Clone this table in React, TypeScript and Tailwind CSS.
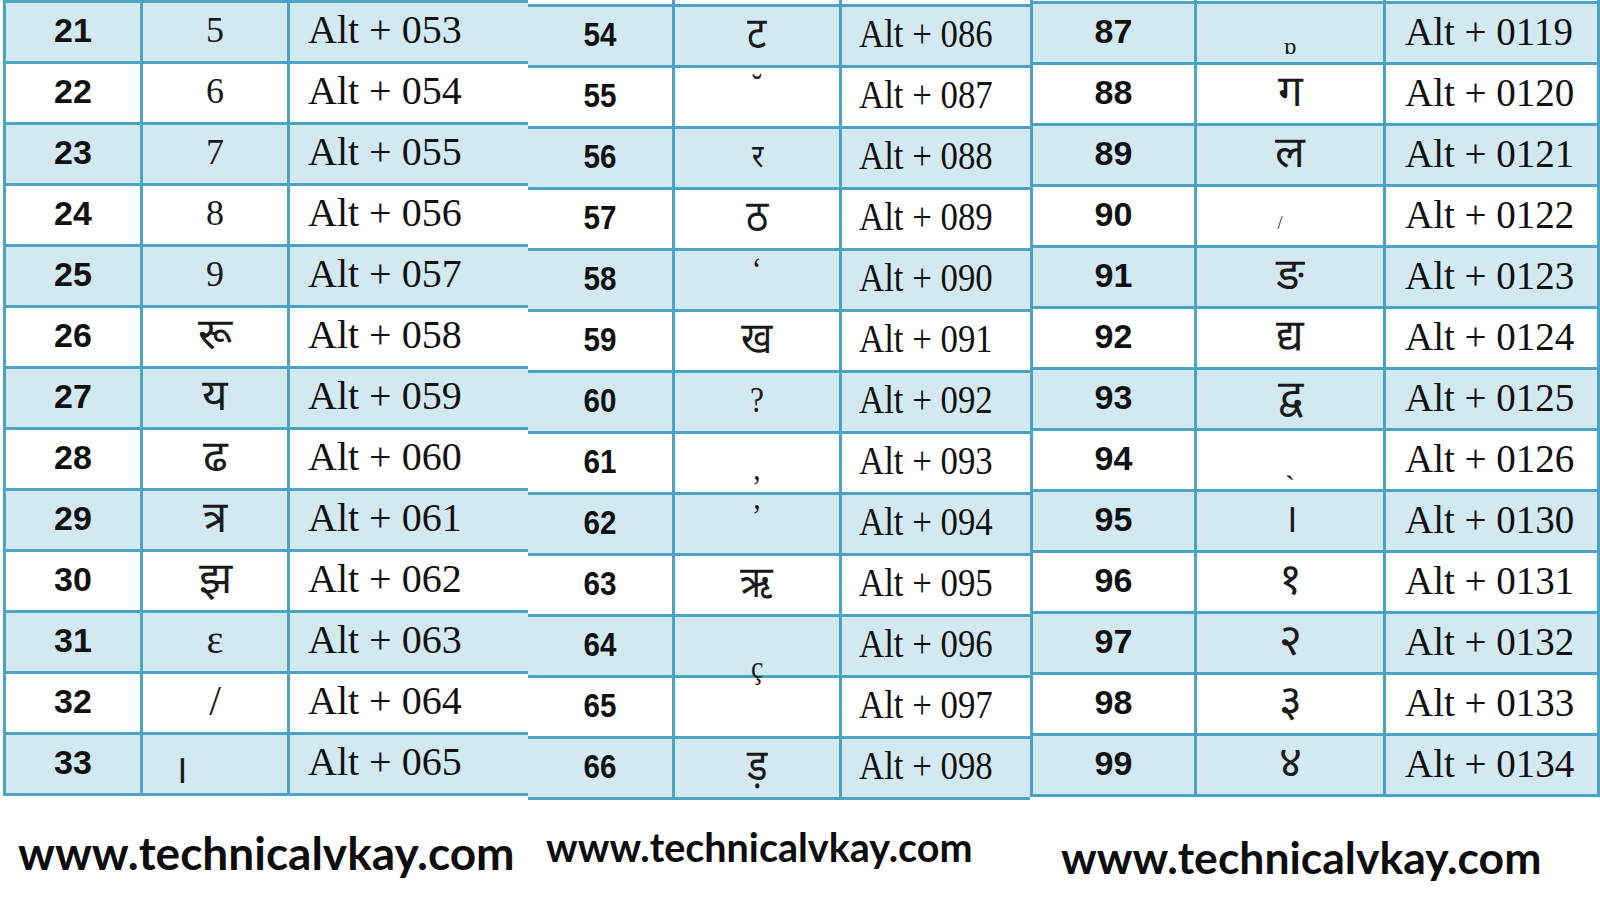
import React from 'react';

type Row = {
  n: number;
  g: string;
  alt: string;
  // classes for the glyph cell and the glyph itself (where the mark sits off-centre)
  cell?: string;
  gl?: string;
};

const LINE = 'border-[#4da3c4]';
const DEV = 'text-[44px]';

const left: Row[] = [
  { n: 21, g: '5', alt: 'Alt + 053' },
  { n: 22, g: '6', alt: 'Alt + 054' },
  { n: 23, g: '7', alt: 'Alt + 055' },
  { n: 24, g: '8', alt: 'Alt + 056' },
  { n: 25, g: '9', alt: 'Alt + 057' },
  { n: 26, g: 'रू', alt: 'Alt + 058', gl: DEV },
  { n: 27, g: 'य', alt: 'Alt + 059', gl: DEV },
  { n: 28, g: 'ढ', alt: 'Alt + 060', gl: DEV },
  { n: 29, g: 'त्र', alt: 'Alt + 061', gl: DEV },
  { n: 30, g: 'झ', alt: 'Alt + 062', gl: DEV },
  { n: 31, g: 'ɛ', alt: 'Alt + 063', gl: 'text-[40px]' },
  { n: 32, g: '/', alt: 'Alt + 064', gl: 'text-[42px]' },
  { n: 33, g: '।', alt: 'Alt + 065', cell: 'items-center justify-start pl-[30px] pt-[12px]', gl: 'text-[40px]' },
];

const middle: Row[] = [
  { n: 54, g: 'ट', alt: 'Alt + 086', gl: DEV },
  { n: 55, g: '˘', alt: 'Alt + 087', cell: 'items-start', gl: 'text-[36px] mt-[1px]' },
  { n: 56, g: 'र', alt: 'Alt + 088', gl: 'text-[32px]' },
  { n: 57, g: 'ठ', alt: 'Alt + 089', gl: DEV },
  { n: 58, g: '‘', alt: 'Alt + 090', cell: 'items-start', gl: 'text-[34px] mt-[2px]' },
  { n: 59, g: 'ख', alt: 'Alt + 091', gl: DEV },
  { n: 60, g: '?', alt: 'Alt + 092' },
  { n: 61, g: '‚', alt: 'Alt + 093', cell: 'items-center pt-[12px]', gl: 'text-[34px]' },
  { n: 62, g: '’', alt: 'Alt + 094', cell: 'items-start', gl: 'mt-[4px] text-[34px]' },
  { n: 63, g: 'ऋ', alt: 'Alt + 095', gl: DEV },
  { n: 64, g: 'ç', alt: 'Alt + 096', cell: 'items-end', gl: '-mb-[8px] text-[32px]' },
  { n: 65, g: '', alt: 'Alt + 097' },
  { n: 66, g: 'ड़', alt: 'Alt + 098', gl: DEV },
];

const right: Row[] = [
  { n: 87, g: 'ɒ', alt: 'Alt + 0119', cell: 'items-end pb-[4px]', gl: 'text-[24px]' },
  { n: 88, g: 'ग', alt: 'Alt + 0120', gl: DEV },
  { n: 89, g: 'ल', alt: 'Alt + 0121', gl: DEV },
  { n: 90, g: '/', alt: 'Alt + 0122', cell: 'items-center pt-[14px] pr-[20px]', gl: 'text-[18px]' },
  { n: 91, g: 'ङ', alt: 'Alt + 0123', gl: DEV },
  { n: 92, g: 'द्य', alt: 'Alt + 0124', gl: DEV },
  { n: 93, g: 'द्व', alt: 'Alt + 0125', gl: DEV },
  { n: 94, g: 'ˋ', alt: 'Alt + 0126', cell: 'items-end', gl: '-mb-[12px] text-[30px]' },
  { n: 95, g: '।', alt: 'Alt + 0130', gl: 'text-[40px]' },
  { n: 96, g: '१', alt: 'Alt + 0131', gl: DEV },
  { n: 97, g: '२', alt: 'Alt + 0132', gl: DEV },
  { n: 98, g: '३', alt: 'Alt + 0133', gl: DEV },
  { n: 99, g: '४', alt: 'Alt + 0134', gl: DEV },
];

const serif = "font-['Liberation_Serif','Times_New_Roman',serif]";
const sans = "font-['Liberation_Sans',Arial,sans-serif]";

function Table({
  rows,
  outer,
  w1,
  w2,
  stub,
  squeeze,
  altPad,
  altSize,
}: {
  rows: Row[];
  outer: string;
  w1: string;
  w2: string;
  stub: string;
  squeeze: string;
  altPad: string;
  altSize: string;
}) {
  return (
    <div className={outer}>
      <div className={`flex ${stub}`}>
        <div className={`${w1} shrink-0 border-r-[3px] ${LINE}`} />
        <div className={`${w2} shrink-0 border-r-[3px] ${LINE}`} />
        <div className="flex-1" />
      </div>
      <div className={`border-t-[3px] ${LINE}`}>
        {rows.map((r, i) => (
          <div
            key={r.n}
            className={`flex h-[61px] border-b-[3px] ${LINE} ${i % 2 === 0 ? 'bg-[#d3e9f1]' : 'bg-white'}`}
          >
            <div className={`${w1} shrink-0 border-r-[3px] ${LINE} flex items-center justify-center pb-[4px]`}>
              <span className={`${sans} ${squeeze} inline-block font-bold text-[34px] leading-none text-[#111]`}>
                {r.n}
              </span>
            </div>
            <div className={`${w2} shrink-0 border-r-[3px] ${LINE} flex justify-center ${r.cell ?? 'items-center pb-[4px]'}`}>
              <span
                className={`${serif} ${squeeze} inline-block leading-none text-[#1a1a1a] ${r.gl ?? 'text-[36px]'}`}
              >
                {r.g}
              </span>
            </div>
            <div className={`flex-1 flex items-center pb-[4px] ${altPad}`}>
              <span className={`${serif} ${squeeze} ${altSize} origin-left inline-block leading-none whitespace-nowrap text-[#111]`}>
                {r.alt}
              </span>
            </div>
          </div>
        ))}
      </div>
    </div>
  );
}

function Site({ cls }: { cls: string }) {
  return (
    <div className={`font-['Lato','Open_Sans',sans-serif] font-bold leading-none text-[#0d0d0d] whitespace-nowrap ${cls}`}>
      www.technicalvkay.com
    </div>
  );
}

export default function App() {
  return (
    <div className="w-[1600px] h-[900px] bg-white overflow-hidden flex">
      <div className="ml-[3px] w-[525px] shrink-0 flex flex-col">
        <Table
          rows={left}
          outer={`border-l-[3px] ${LINE}`}
          w1="w-[137px]"
          w2="w-[147px]"
          stub="h-0"
          squeeze=""
          altPad="pl-[18px]"
          altSize="text-[40px]"
        />
        <Site cls="mt-[34px] pl-[15px] text-[46px]" />
      </div>
      <div className="w-[502px] shrink-0 flex flex-col">
        <Table
          rows={middle}
          outer=""
          w1="w-[147px]"
          w2="w-[167px]"
          stub="h-[4px]"
          squeeze="scale-x-[0.87]"
          altPad="pl-[17px]"
          altSize="text-[40px]"
        />
        <Site cls="mt-[27px] pl-[18px] text-[39.5px]" />
      </div>
      <div className="w-[570px] shrink-0 flex flex-col">
        <Table
          rows={right}
          outer={`border-x-[3px] ${LINE}`}
          w1="w-[164px]"
          w2="w-[189px]"
          stub="h-[1px]"
          squeeze=""
          altPad="pl-[19px]"
          altSize="text-[39px]"
        />
        <Site cls="mt-[38px] pl-[31px] text-[44.5px]" />
      </div>
    </div>
  );
}
